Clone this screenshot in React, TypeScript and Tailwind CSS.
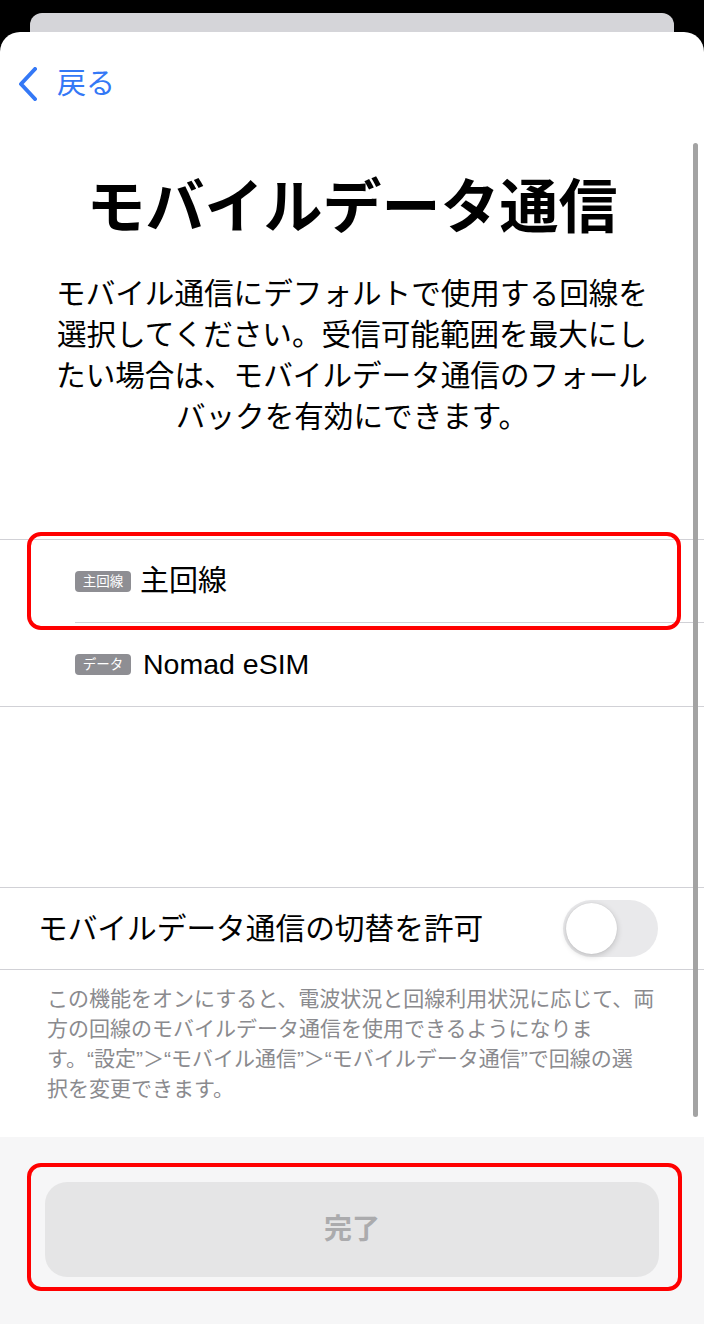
import React from "react";

function Badge({ label }: { label: string }) {
  return (
    <span className="flex h-[21px] w-[56px] items-center justify-center rounded-[4px] bg-[#8e8e93] text-[13.5px] leading-none text-white">
      {label}
    </span>
  );
}

export default function App() {
  return (
    <div className="flex h-[1324px] w-[704px] flex-col overflow-hidden bg-black font-['Liberation_Sans','Noto_Sans_CJK_JP',sans-serif]">
      <div className="mx-[30px] mt-[13px] h-[19px] shrink-0 rounded-t-[12px] bg-[#d5d5d9]" />
      <div className="relative flex flex-1 flex-col overflow-hidden rounded-t-[20px] bg-white">
        {/* scroll content */}
        <div className="flex flex-1 flex-col">
          <div className="mt-[36px] flex h-[32px] items-center pl-[18px] text-[#3478f6]">
            <svg width="20" height="34" viewBox="0 0 20 34" fill="none" className="mr-[19px]">
              <path d="M17 2 L3 17 L17 32" stroke="#3478f6" strokeWidth="4" strokeLinecap="round" strokeLinejoin="round" />
            </svg>
            <span className="text-[29px] leading-[32px]">戻る</span>
          </div>

          <h1 className="mt-[73px] text-center text-[59px] font-bold leading-[70px] text-black">
            モバイルデータ通信
          </h1>
          <p className="mt-[30px] text-center text-[29.6px] leading-[41px] text-black">
            モバイル通信にデフォルトで使用する回線を
            <br />
            選択してください。受信可能範囲を最大にし
            <br />
            たい場合は、モバイルデータ通信のフォール
            <br />
            バックを有効にできます。
          </p>

          <div className="mt-[102px] border-t border-[#d1d1d6]">
            <div className="relative flex h-[83px] items-center pl-[75px]">
              <Badge label="主回線" />
              <span className="ml-[9px] text-[29px] leading-none text-black">主回線</span>
              <div className="absolute bottom-0 left-[75px] right-0 h-px bg-[#d1d1d6]" />
              <div className="pointer-events-none absolute -top-[8px] -bottom-[7px] left-[27px] right-[23px] rounded-[14px] border-[4px] border-[#ff0000]" />
            </div>
            <div className="flex h-[84px] items-center border-b border-[#d1d1d6] pl-[75px]">
              <Badge label="データ" />
              <span className="ml-[12px] text-[28.5px] leading-none text-black">Nomad eSIM</span>
            </div>
          </div>

          <div className="mt-[180px] flex h-[83px] items-center justify-between border-y border-[#d1d1d6] pl-[38px] pr-[46px]">
            <span className="text-[29.7px] leading-none text-black">モバイルデータ通信の切替を許可</span>
            <div className="flex h-[57px] w-[95px] items-center rounded-full bg-[#e9e9eb] p-[3px]">
              <div className="h-[51px] w-[51px] rounded-full bg-white shadow-[0_2px_6px_rgba(0,0,0,0.18),0_0_1px_rgba(0,0,0,0.15)]" />
            </div>
          </div>

          <p className="mt-[14px] pl-[47px] text-[21px] leading-[30px] text-[#8a8a8e]">
            この機能をオンにすると、電波状況と回線利用状況に応じて、両
            <br />
            方の回線のモバイルデータ通信を使用できるようになりま
            <br />
            す。“設定”＞“モバイル通信”＞“モバイルデータ通信”で回線の選
            <br />
            択を変更できます。
          </p>
        </div>

        {/* bottom panel */}
        <div className="flex h-[187px] shrink-0 flex-col bg-[#f6f6f7] px-[45px] pt-[45px]">
          <div className="relative">
            <div className="flex h-[95px] items-center justify-center rounded-[22px] bg-[#e5e5e6] text-[28px] font-bold text-[#ababad]">
              完了
            </div>
            <div className="pointer-events-none absolute -top-[19px] -bottom-[14px] -left-[18px] -right-[23px] rounded-[14px] border-[4px] border-[#ff0000]" />
          </div>
        </div>

        {/* scroll indicator */}
        <div className="absolute left-[693px] top-[111px] h-[974px] w-[5px] rounded-full bg-[#a3a3a3]" />
      </div>
    </div>
  );
}
